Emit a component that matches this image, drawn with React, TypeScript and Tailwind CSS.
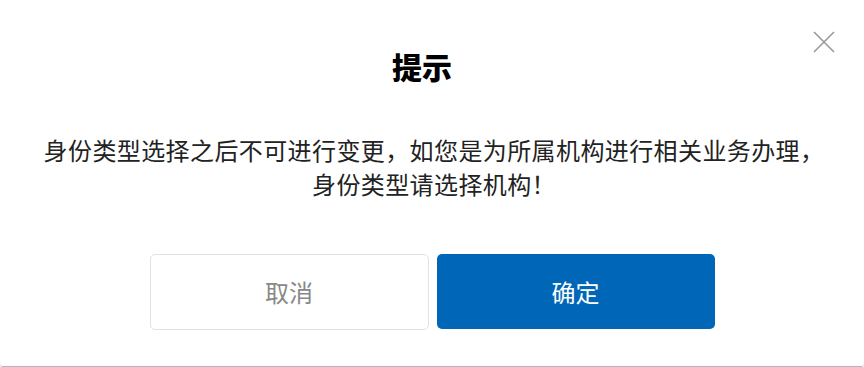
export default function App() {
  return (
    <div
      className="relative w-full h-[367px] bg-white border-b border-[#b5b5b5] rounded-b-[3px] overflow-hidden"
      style={{ fontFamily: '"Noto Sans CJK SC", "Noto Sans", sans-serif' }}
    >
      <button className="absolute left-[812px] top-[30px] w-[24px] h-[24px] flex items-center justify-center">
        <svg width="22" height="22" viewBox="0 0 22 22" fill="none">
          <path d="M1 1L21 21M21 1L1 21" stroke="#999999" strokeWidth="1.6" />
        </svg>
      </button>
      <div className="flex flex-col items-center">
        <h1 className="mt-[46px] pr-[20px] text-[30px] leading-[40px] font-black text-black">提示</h1>
        <p className="mt-[47px] pl-[4px] text-center text-[24px] leading-[34px] text-[#222] tracking-[0.4px]">
          身份类型选择之后不可进行变更，如您是为所属机构进行相关业务办理，
          <br />
          身份类型请选择机构！
        </p>
        <div className="mt-[53px] flex gap-[8px]">
          <button className="w-[279px] h-[76px] rounded-[5px] border border-[#e3e3e3] bg-white text-[24px] text-[#888888]">
            取消
          </button>
          <button className="w-[278px] h-[75px] rounded-[5px] bg-[#0067b8] text-[24px] font-normal text-white">
            确定
          </button>
        </div>
      </div>
    </div>
  );
}
